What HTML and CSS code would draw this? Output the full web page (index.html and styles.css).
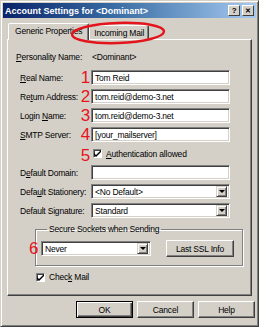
FILE: index.html
```html
<!DOCTYPE html>
<html lang="en">
<head>
  <meta charset="UTF-8">
  <meta name="viewport" content="width=device-width, initial-scale=1.0">
  <link rel="stylesheet" href="styles.css">
  <title>Account Settings</title>
</head>
<body>

  <div class="window">
    <div class="titlebar">
      <span class="title">Account Settings for &lt;Dominant&gt;</span>
      <span class="title-btn">?</span>
      <span class="title-btn close">&#x2715;</span>
    </div>

    <div class="tabs">
      <div class="tab active">Generic Properties</div>
      <div class="tab">Incoming Mail</div>
      <!-- red ring drawn over the second tab -->
      <svg class="ring" width="100" height="26" viewBox="0 0 100 26">
        <ellipse cx="48" cy="12" rx="46" ry="10" fill="none" stroke="#e3141b" stroke-width="2.5" transform="rotate(-2 48 12)"/>
      </svg>
    </div>

    <div class="panel">
      <div class="form">
        <div class="label first"><u>P</u>ersonality Name:</div>
        <div></div>
        <div class="value">&lt;Dominant&gt;</div>

        <div class="label"><u>R</u>eal Name:</div>
        <div class="num">1</div>
        <div class="field">Tom Reid</div>

        <div class="label">Re<u>t</u>urn Address:</div>
        <div class="num">2</div>
        <div class="field">tom.reid@demo-3.net</div>

        <div class="label">Login <u>N</u>ame:</div>
        <div class="num">3</div>
        <div class="field">tom.reid@demo-3.net</div>

        <div class="label"><u>S</u>MTP Server:</div>
        <div class="num">4</div>
        <div class="field">[your_mailserver]</div>

        <div></div>
        <div class="num">5</div>
        <div class="check-row"><span class="checkbox"><svg width="7" height="7" viewBox="0 0 7 7"><path d="M0 3 L2 5 L7 0 L7 2 L2 7 L0 5 Z" fill="#000"/></svg></span><span><u>A</u>uthentication allowed</span></div>

        <div class="label">D<u>e</u>fault Domain:</div>
        <div></div>
        <div class="field"></div>

        <div class="label">Defa<u>u</u>lt Stationery:</div>
        <div></div>
        <div class="field select"><span>&lt;No Default&gt;</span><span class="drop"></span></div>

        <div class="label">Default Si<u>g</u>nature:</div>
        <div></div>
        <div class="field select"><span>Standard</span><span class="drop"></span></div>
      </div>

      <fieldset class="group">
        <legend>Secure Sockets when Sending</legend>
        <div class="group-row">
          <span class="num six">6</span>
          <div class="field select never"><span>Never</span><span class="drop"></span></div>
          <div class="button ssl">Last SSL Info</div>
        </div>
      </fieldset>

      <div class="check-row mail"><span class="checkbox"><svg width="7" height="7" viewBox="0 0 7 7"><path d="M0 3 L2 5 L7 0 L7 2 L2 7 L0 5 Z" fill="#000"/></svg></span><span>Chec<u>k</u> Mail</span></div>
    </div>

    <div class="actions">
      <div class="button default">OK</div>
      <div class="button">Cancel</div>
      <div class="button">Help</div>
    </div>
  </div>

</body>
</html>
```
FILE: styles.css
```css
body{
    margin: 0;
    background-color: #ffffff;
    font-family: "Liberation Sans", Arial, sans-serif;
    font-size: 8.5px;
    letter-spacing: -0.2px;
    color: #000000;
}

.window{
    width: 259px;
    height: 327px;
    box-sizing: border-box;
    padding: 2px;
    background-color: #d4d0c8;
    border: 1px solid;
    border-color: #d4d0c8 #404040 #404040 #d4d0c8;
    box-shadow: inset 1px 1px #ffffff, inset -1px -1px #808080;
    display: flex;
    flex-direction: column;
}

.titlebar{
    height: 15px;
    display: flex;
    align-items: center;
    gap: 2px;
    padding: 0 2px;
    background: linear-gradient(to right, #0a246a, #3a6ea5 45%, #a6caf0);
}

.title{
    flex: 1;
    color: #ffffff;
    font-weight: bold;
    font-size: 9px;
    letter-spacing: 0;
}

.title-btn{
    width: 12px;
    height: 11px;
    box-sizing: border-box;
    display: flex;
    align-items: center;
    justify-content: center;
    background-color: #d4d0c8;
    border: 1px solid;
    border-color: #ffffff #404040 #404040 #ffffff;
    font-weight: bold;
    font-size: 8px;
    line-height: 1;
}

.title-btn.close{
    font-size: 7px;
}

.tabs{
    position: relative;
    display: flex;
    align-items: flex-end;
    height: 18px;
    margin-top: 3px;
    padding-left: 5px;
}

.tab{
    height: 14px;
    box-sizing: border-box;
    padding: 0 4px;
    display: flex;
    align-items: center;
    border: 1px solid;
    border-bottom: none;
    border-color: #ffffff #404040 transparent #ffffff;
    box-shadow: inset -1px 0 #808080;
    border-radius: 2px 2px 0 0;
}

.tab.active{
    height: 17px;
    padding: 0 6px 3px;
    margin-bottom: -1px;
    background-color: #d4d0c8;
    position: relative;
    z-index: 1;
}

.ring{
    position: absolute;
    left: 67px;
    top: 0;
    z-index: 2;
}

.panel{
    margin-left: 4px;
    width: 245px;
    height: 257px;
    box-sizing: border-box;
    padding: 11px 0 0 12px;
    border: 1px solid;
    border-color: #ffffff #404040 #404040 #ffffff;
    box-shadow: inset -1px -1px #808080;
}

.form{
    display: grid;
    grid-template-columns: 60px 11px 139px;
    grid-auto-rows: 15px;
    row-gap: 4px;
    align-items: center;
}

.label{
    white-space: nowrap;
}

.label.first{
    margin-left: -4px;
}

.form .value{
    padding-left: 1px;
}

.form > :nth-child(-n+3){
    margin-top: -4px;
}

.form > :nth-child(n+16):nth-child(-n+18){
    height: 11px;
}

.num{
    color: #e8141b;
    font-size: 17px;
    letter-spacing: 0;
    line-height: 15px;
    text-align: center;
}

.field{
    height: 15px;
    box-sizing: border-box;
    padding-left: 3px;
    display: flex;
    align-items: center;
    background-color: #ffffff;
    border: 1px solid;
    border-color: #808080 #ffffff #ffffff #808080;
    box-shadow: inset 1px 1px #404040, inset -1px -1px #d4d0c8;
    white-space: nowrap;
}

.select{
    justify-content: space-between;
    padding-right: 2px;
}

.drop{
    width: 11px;
    height: 11px;
    box-sizing: border-box;
    background-color: #d4d0c8;
    border: 1px solid;
    border-color: #d4d0c8 #404040 #404040 #d4d0c8;
    box-shadow: inset 1px 1px #ffffff, inset -1px -1px #808080;
    display: flex;
    align-items: center;
    justify-content: center;
}

.drop::after{
    content: "";
    border-left: 3px solid transparent;
    border-right: 3px solid transparent;
    border-top: 3px solid #000000;
}

.check-row{
    display: flex;
    align-items: center;
    gap: 4px;
    padding-left: 2px;
    white-space: nowrap;
}

.checkbox{
    width: 9px;
    height: 9px;
    box-sizing: border-box;
    background-color: #ffffff;
    border: 1px solid;
    border-color: #808080 #ffffff #ffffff #808080;
    box-shadow: inset 1px 1px #404040;
    display: flex;
    align-items: center;
    justify-content: center;
}

.group{
    margin: 6px 0 0 15px;
    padding: 6px 8px 8px 5px;
    width: 207px;
    box-sizing: border-box;
    border: 1px solid #808080;
    box-shadow: inset 1px 1px #ffffff, 1px 1px #ffffff;
}

.group legend{
    padding: 0 2px;
    margin-left: 6px;
}

.group-row{
    position: relative;
    display: flex;
    align-items: center;
    gap: 15px;
}

.num.six{
    position: absolute;
    left: -12px;
    top: 1px;
}

.never{
    width: 110px;
}

.button{
    height: 17px;
    box-sizing: border-box;
    display: flex;
    align-items: center;
    justify-content: center;
    background-color: #d4d0c8;
    border: 1px solid;
    border-color: #ffffff #404040 #404040 #ffffff;
    box-shadow: inset -1px -1px #808080;
}

.ssl{
    width: 68px;
}

.check-row.mail{
    margin: 6px 0 0 14px;
}

.actions{
    display: flex;
    justify-content: flex-end;
    gap: 4px;
    margin-top: 5px;
    padding-right: 1px;
}

.actions .button{
    width: 57px;
}

.button.default{
    border: 1px solid #000000;
    box-shadow: inset 1px 1px #ffffff, inset -1px -1px #404040, inset -2px -2px #808080;
}
```
